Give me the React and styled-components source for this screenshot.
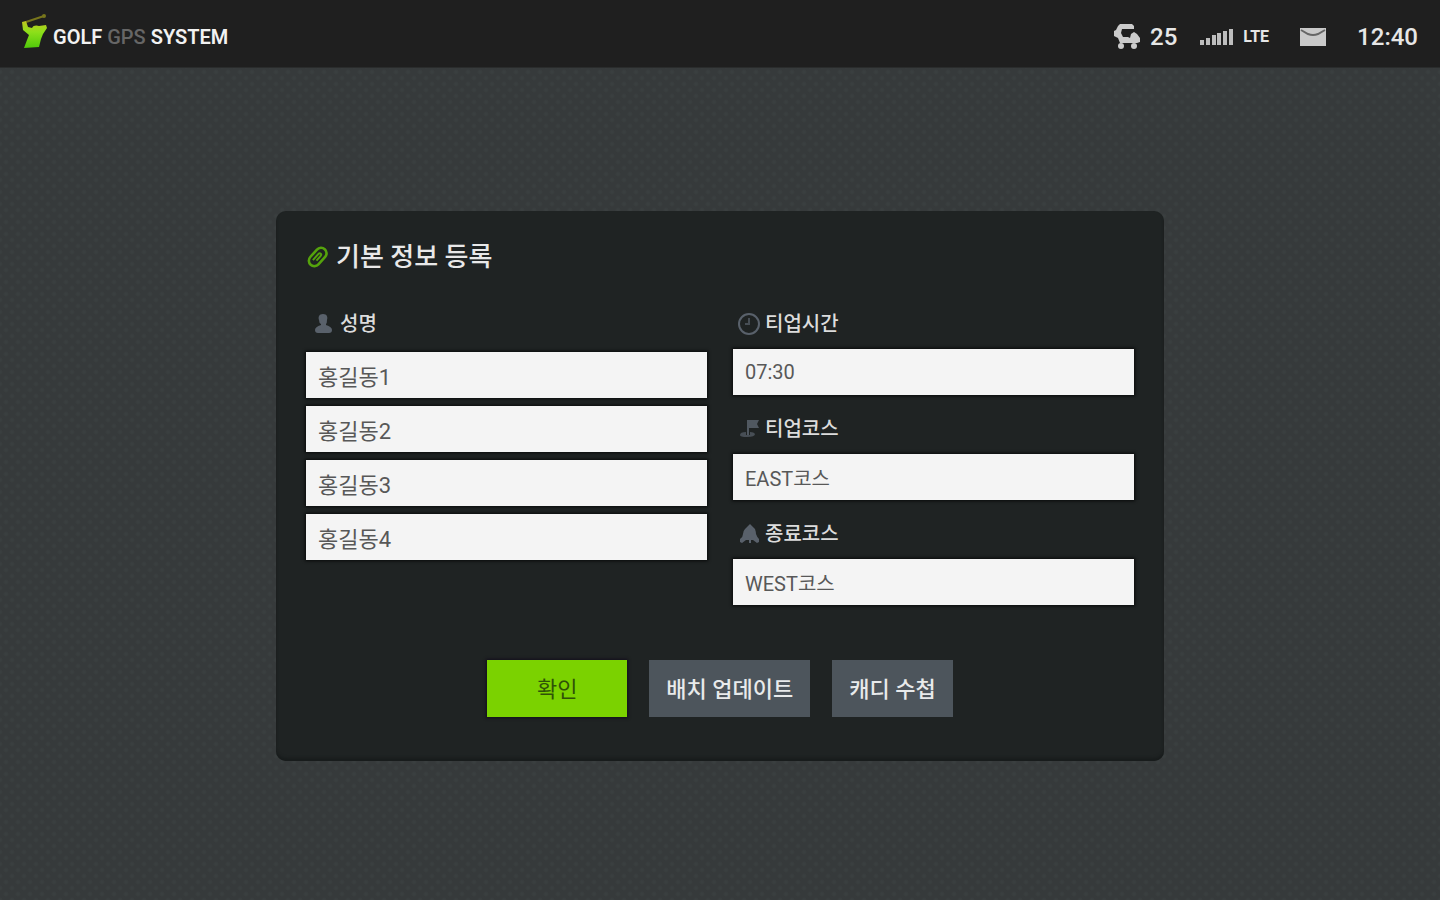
import React from "react";
import styled, { createGlobalStyle } from "styled-components";

const GlobalStyle = createGlobalStyle`
  * {
    box-sizing: border-box;
  }

  body {
    margin: 0;
    font-family: Roboto, "Noto Sans CJK KR", sans-serif;
  }
`;

const Page = styled.div`
  display: flex;
  flex-direction: column;
  min-height: 100vh;
  background-color: #363a3b;
  background-image: radial-gradient(circle, #3a3f40 1px, transparent 3px),
    radial-gradient(circle, #3a3f40 1px, transparent 3px);
  background-size: 12px 12px;
  background-position: 0 0, 6px 6px;
`;

const TopBar = styled.header`
  display: flex;
  align-items: center;
  justify-content: space-between;
  height: 68px;
  padding: 6px 22px 0;
  background: #1f1f1f;
  border-bottom: 1px solid #2a2c2c;
  color: #e6e6e6;
`;

const Logo = styled.a`
  display: flex;
  align-items: center;
  gap: 5px;
  color: #f2f2f2;
  font-size: 20px;
  font-weight: 600;
  line-height: 24px;
  text-decoration: none;
`;

const LogoMuted = styled.span`
  color: #666;
  font-weight: 500;
`;

const Status = styled.div`
  display: flex;
  align-items: center;
  gap: 31px;
`;

const StatusGroup = styled.div`
  display: flex;
  align-items: center;
  gap: 23px;
`;

const StatusItem = styled.div`
  display: flex;
  align-items: center;
  gap: 9px;
  font-size: ${props => (props.$small ? 16 : 24)}px;
  font-weight: ${props => (props.$small ? 700 : 500)};
  line-height: 28px;
`;

const Main = styled.main`
  display: flex;
  flex: 1;
  align-items: center;
  justify-content: center;
  padding: 28px 24px 24px;
`;

const Panel = styled.form`
  width: 100%;
  max-width: 888px;
  padding: 30px 30px 44px;
  background: #1f2323;
  border-radius: 10px;
  box-shadow: inset 0 -3px 3px #181c1c;
`;

const Title = styled.h1`
  display: flex;
  align-items: center;
  gap: 8px;
  margin: 0 0 39px;
  color: #e8e8e8;
  font-size: 26px;
  font-weight: 500;
  line-height: 32px;
`;

const Columns = styled.div`
  display: grid;
  grid-template-columns: 1fr 1fr;
  gap: 26px;
`;

const Column = styled.div`
  display: flex;
  flex-direction: column;
  gap: 22px;
`;

const Field = styled.div`
  display: flex;
  flex-direction: column;
  gap: ${props => (props.$list ? 16 : 13)}px;
`;

const Label = styled.label`
  display: flex;
  align-items: center;
  gap: 4px;
  padding-left: 4px;
  color: #dcdcdc;
  font-size: 20px;
  font-weight: 500;
  line-height: 24px;
`;

const InputList = styled.div`
  display: flex;
  flex-direction: column;
  gap: 8px;
`;

const Input = styled.input`
  width: 100%;
  height: 46px;
  padding: 0 12px;
  background: #f4f4f4;
  border: 0;
  border-radius: 0;
  box-shadow: 0 0 3px 1px #080a0a;
  color: #585858;
  font-family: inherit;
  font-size: ${props => (props.$large ? 22 : 20)}px;
  font-weight: 400;
`;

const Actions = styled.div`
  display: flex;
  justify-content: center;
  gap: 22px;
  margin-top: 55px;
`;

const Button = styled.button`
  min-width: ${props => (props.$primary ? 140 : 120)}px;
  height: 57px;
  padding: 0 17px 3px;
  background: ${props => (props.$primary ? "#7bd200" : "#4d555c")};
  border: 0;
  box-shadow: ${props => (props.$primary ? "0 0 3px 1px #130d1c" : "none")};
  color: ${props => (props.$primary ? "#2f5208" : "#e8eaeb")};
  font-family: inherit;
  font-size: 22px;
  font-weight: ${props => (props.$primary ? 400 : 500)};
`;

const GolferIcon = () => (
  <svg width="26" height="46" viewBox="0 0 26 46" aria-hidden="true">
    <defs>
      <linearGradient id="golfer" x1="0" y1="0" x2="0" y2="1">
        <stop offset="0" stopColor="#c2c520" />
        <stop offset="0.4" stopColor="#8ee01a" />
        <stop offset="1" stopColor="#4fc80a" />
      </linearGradient>
    </defs>
    <path d="M4 8 L22 2" stroke="#77751c" strokeWidth="2" />
    <circle cx="22" cy="2" r="2" fill="#77751c" />
    <path
      d="M0 8 L4 7 L6 13 L10 14 C11 11 15 11 17 12 L24 11 L25 14 L21 20 L19 25 L17 33 L2 34 L5 26 L7 21 L1 16 Z"
      fill="url(#golfer)"
    />
  </svg>
);

const CartIcon = () => (
  <svg width="27" height="28" viewBox="0 0 27 28" fill="#cbcbcb" aria-hidden="true">
    <path d="M6 1 H18 L20 3 V6 H8 L7 10 L9 14 H14 L16 15 L17 11 L20 9 L23 11 L26 15 V19 L23 20 H6 L4 15 L0 13 V8 L2 7 L4 3 Z" />
    <circle cx="7" cy="23" r="3" />
    <circle cx="20" cy="23" r="3" />
  </svg>
);

const SignalIcon = () => (
  <svg width="34" height="18" viewBox="0 0 34 18" fill="#bdbdbd" aria-hidden="true">
    <rect x="0" y="12" width="4" height="5" />
    <rect x="6" y="10" width="4" height="7" />
    <rect x="12" y="7" width="4" height="10" />
    <rect x="17" y="5" width="4" height="12" />
    <rect x="23" y="3" width="4" height="14" />
    <rect x="29" y="1" width="4" height="16" />
  </svg>
);

const MailIcon = () => (
  <svg width="26" height="18" viewBox="0 0 26 18" aria-hidden="true">
    <rect width="26" height="18" fill="#c9c9c9" />
    <path d="M1 2 L8 6 Q13 8 18 6 L25 2" fill="none" stroke="#666" strokeWidth="2" />
  </svg>
);

const ClipIcon = () => (
  <svg width="22" height="22" viewBox="0 0 22 22" fill="none" stroke="#55a30c" aria-hidden="true">
    <g transform="rotate(42 11 11)" strokeWidth="2.6">
      <rect x="6" y="0" width="11" height="21" rx="5.5" />
      <path d="M10 16 V8 Q10 6 11.5 6 T13 8 V14" strokeWidth="2" />
    </g>
  </svg>
);

const PersonIcon = () => (
  <svg width="26" height="22" viewBox="0 0 26 22" fill="#59616b" aria-hidden="true">
    <path d="M13 1 C17 1 18 4 17 7 Q17 10 16 11 V12 Q22 14 22 17 Q22 20 19 20 H8 Q5 20 5 17 Q5 14 11 12 V11 Q9 10 9 7 C8 4 9 1 13 1 Z" />
  </svg>
);

const ClockIcon = () => (
  <svg width="24" height="24" viewBox="0 0 24 24" fill="none" stroke="#59616b" aria-hidden="true">
    <circle cx="12" cy="12" r="10" strokeWidth="2" />
    <path d="M12 6 V12 H8" strokeWidth="2" strokeOpacity="0.7" />
  </svg>
);

const FlagIcon = () => (
  <svg width="24" height="22" viewBox="0 0 24 22" fill="#59616b" aria-hidden="true">
    <path d="M10 2 H22 L20 6 L22 10 H12 V17 H10 Z" fillOpacity="0.85" />
    <path d="M9 14 Q3 14 3 17 Q3 19 10 19 Q18 19 18 16 Q17 14 13 14 V17 H9 Z" fillOpacity="0.7" />
  </svg>
);

const BellIcon = () => (
  <svg width="24" height="22" viewBox="0 0 24 22" fill="#59616b" aria-hidden="true">
    <path d="M13 1 Q15 3 18 6 Q19 9 19 11 Q20 14 22 16 V19 L20 20 L16 17 H14 V20 H12 V17 H9 L5 20 L3 19 V16 Q6 14 6 11 Q6 8 8 6 Q11 3 13 1 Z" />
  </svg>
);

const names = ["홍길동1", "홍길동2", "홍길동3", "홍길동4"];

const fields = [
  { id: "teeTime", label: "티업시간", value: "07:30", Icon: ClockIcon },
  { id: "startCourse", label: "티업코스", value: "EAST코스", Icon: FlagIcon },
  { id: "endCourse", label: "종료코스", value: "WEST코스", Icon: BellIcon }
];

const App = () => {
  return (
    <Page>
      <GlobalStyle />
      <TopBar>
        <Logo href="#">
          <GolferIcon />
          <span>GOLF</span>
          <LogoMuted>GPS</LogoMuted>
          <span>SYSTEM</span>
        </Logo>
        <Status>
          <StatusGroup>
            <StatusItem>
              <CartIcon />
              25
            </StatusItem>
            <StatusItem $small>
              <SignalIcon />
              LTE
            </StatusItem>
          </StatusGroup>
          <MailIcon />
          <StatusItem>12:40</StatusItem>
        </Status>
      </TopBar>
      <Main>
        <Panel onSubmit={e => e.preventDefault()}>
          <Title>
            <ClipIcon />
            기본 정보 등록
          </Title>
          <Columns>
            <Column>
              <Field $list>
                <Label htmlFor="player0">
                  <PersonIcon />
                  성명
                </Label>
                <InputList>
                  {names.map((name, i) => (
                    <Input
                      key={name}
                      id={`player${i}`}
                      aria-label={i > 0 ? "성명" : undefined}
                      defaultValue={name}
                      $large
                    />
                  ))}
                </InputList>
              </Field>
            </Column>
            <Column>
              {fields.map(({ id, label, value, Icon }) => (
                <Field key={id}>
                  <Label htmlFor={id}>
                    <Icon />
                    {label}
                  </Label>
                  <Input id={id} defaultValue={value} />
                </Field>
              ))}
            </Column>
          </Columns>
          <Actions>
            <Button type="submit" $primary>
              확인
            </Button>
            <Button type="button">배치 업데이트</Button>
            <Button type="button">캐디 수첩</Button>
          </Actions>
        </Panel>
      </Main>
    </Page>
  );
};

export default App;
